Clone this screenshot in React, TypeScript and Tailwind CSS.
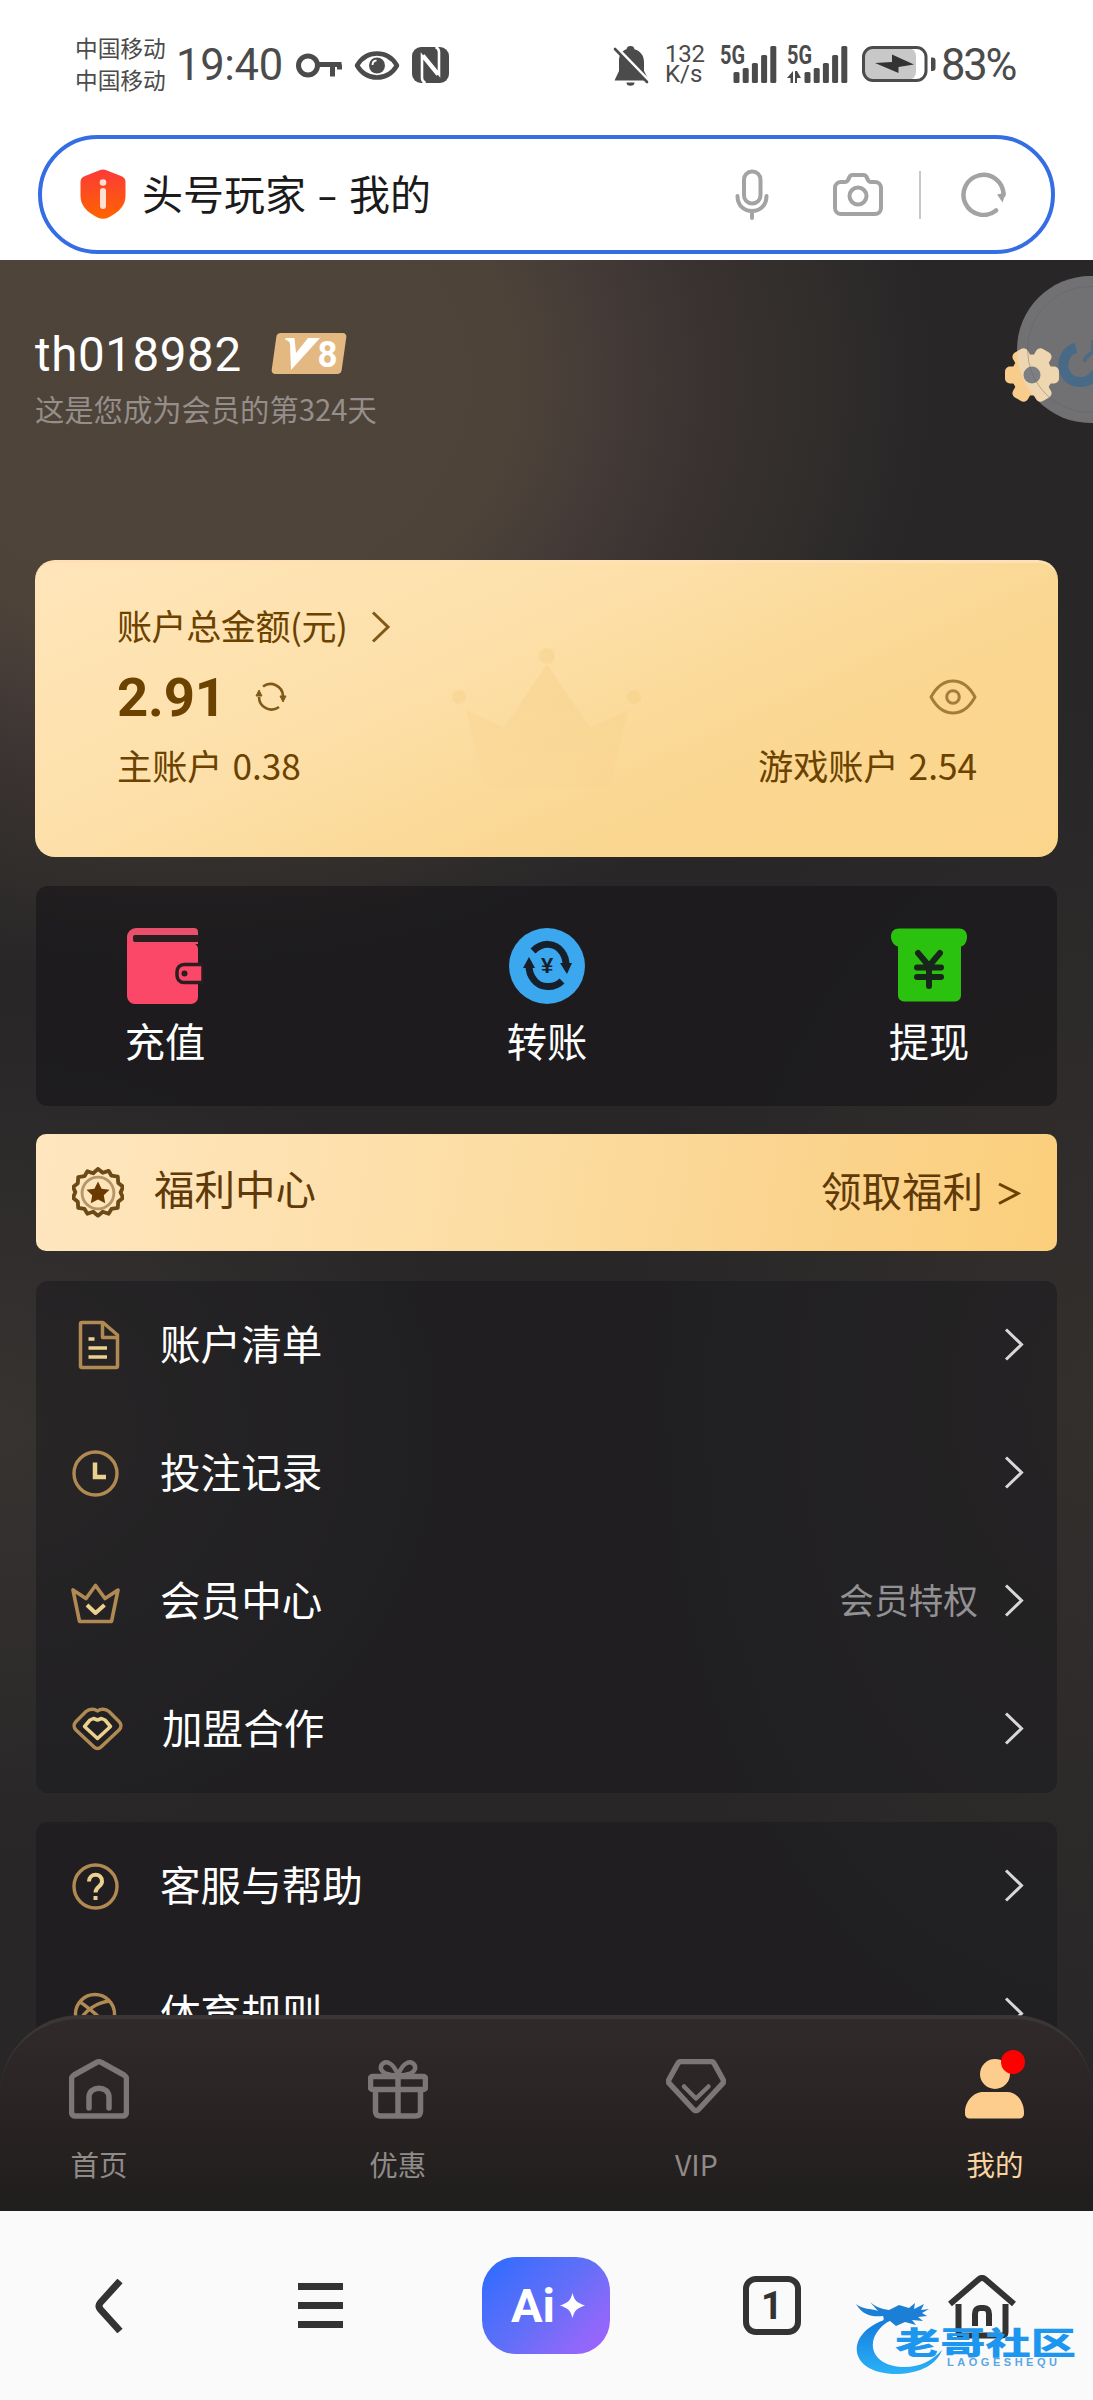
import type { ReactNode } from 'react'
import clsx from 'clsx'

function SignalBars() {
  return (
    <>
      <rect x="0" y="26" width="6" height="11" rx="1.5" />
      <rect x="9.2" y="22" width="6" height="15" rx="1.5" />
      <rect x="18.4" y="17" width="6" height="20" rx="1.5" />
      <rect x="27.6" y="9" width="6" height="28" rx="1.5" />
      <rect x="36.8" y="0" width="6" height="37" rx="1.5" />
    </>
  )
}

function Signal({ active }: { active?: boolean }) {
  return (
    <svg width="60" height="37" viewBox="0 0 60 37" fill="#4b4b4b" className="shrink-0 overflow-visible">
      <text x="0" y="18" fontSize="25" fontWeight="700" textLength="25" lengthAdjust="spacingAndGlyphs" className="font-['Roboto',sans-serif]">5G</text>
      <g transform={active ? 'translate(17.5 0)' : 'translate(13.5 0)'}>
        <SignalBars />
      </g>
      {active && <path d="M0 32l6-7v12H3.500v-5zM8 25v12h2v-5h4l-4-7z" />}
    </svg>
  )
}

function StatusBar() {
  return (
    <div className="flex h-[130px] items-start pt-[46px] pl-[75px] text-[#4b4b4b]">
      <div className="-mt-[14px] w-[101px] shrink-0 text-[22.7px] leading-[32px] whitespace-nowrap">
        <div>中国移动</div>
        <div>中国移动</div>
      </div>
      <div className="-mt-[4px] w-[120px] shrink-0 font-['Roboto','Noto_Sans_CJK_SC',sans-serif] text-[43.5px] leading-[47px] tracking-[-0.3px]">19:40</div>
      <svg width="154" height="38" viewBox="0 0 154 38" className="shrink-0" fill="none" stroke="#4b4b4b">
        <circle cx="12" cy="19.500" r="9.500" strokeWidth="5" />
        <path d="M22 18.500h23.500M36.500 18.500v12M43.500 18.500v5" strokeWidth="5" />
        <path d="M61 19.500C66 11 73 7.500 81 7.500s15 3.500 20 12c-5 8.500-12 12-20 12s-15-3.500-20-12z" strokeWidth="4.500" strokeLinejoin="round" />
        <circle cx="81" cy="19.500" r="8" fill="#4b4b4b" stroke="none" />
        <path d="M76.500 19a4.500 4.500 0 0 1 4-4.500" stroke="#fff" strokeWidth="1.800" />
        <rect x="116" y="1" width="37" height="36" rx="9" fill="#4b4b4b" stroke="none" />
        <path d="M129.500 37c-2.500-1-3.500-3-3.500-5V10l15.500 19" stroke="#fff" strokeWidth="2.600" />
        <path d="M139.500 1c2.500 1 3.500 3 3.500 5v22L127.500 9" stroke="#fff" strokeWidth="2.600" />
      </svg>
      <svg width="38" height="40" viewBox="0 0 38 40" className="ml-[162px] shrink-0">
        <path d="M18.500 0a4 4 0 0 1 4 3.200C28.500 5 32 9.500 32 16v9l5 9.500H2.500L7 25V13.500C7.500 8 10 4.500 14.500 3.200A4 4 0 0 1 18.500 0zM14.500 36.500h8a4 3.300 0 0 1-8 0z" fill="#4b4b4b" />
        <path d="M1 4.500l33 34" stroke="#fff" strokeWidth="4" transform="translate(3 -3)" />
        <path d="M3 3l32 33" stroke="#4b4b4b" strokeWidth="2.600" strokeLinecap="round" />
      </svg>
      <div className="-mt-[2px] ml-[15px] w-[55px] shrink-0 font-['Roboto',sans-serif] text-[24px] leading-[20px]">
        <div className="tracking-[-0.2px]">132</div>
        <div>K/s</div>
      </div>
      <Signal />
      <div className="w-[7px] shrink-0" />
      <Signal active />
      <svg width="76" height="37" viewBox="0 0 76 37" className="ml-[15px] shrink-0">
        <rect x="2" y="2" width="52" height="32" rx="8" fill="#c8c8c8" />
        <rect x="1.500" y="1.500" width="62.500" height="33" rx="9.500" fill="none" stroke="#4b4b4b" strokeWidth="3" />
        <path d="M69 11.500h1.500a3 3 0 0 1 3 3v7.500a3 3 0 0 1-3 3H69z" fill="#4b4b4b" />
        <path d="M13 17l17-1V8.500l22 10-15.500 2.500v6z" fill="#333" />
      </svg>
      <div className="-mt-[4px] ml-[3px] font-['Roboto','Noto_Sans_CJK_SC',sans-serif] text-[43.500px] leading-[47px] tracking-[-2.2px]">83%</div>
    </div>
  )
}

function AddressBar() {
  return (
    <div className="h-[130px] px-[38px] pt-[5px]">
      <div className="flex h-[119px] items-center rounded-full border-[4.5px] border-[#356de4] pl-[38px] pr-[45px]">
        <svg width="46" height="50" viewBox="0 0 46 50" className="-mt-[2px] shrink-0">
          <defs>
            <linearGradient id="shield" x1="0" y1="0" x2="0" y2="1">
              <stop offset="0" stopColor="#fb3a38" />
              <stop offset="1" stopColor="#ff6400" />
            </linearGradient>
          </defs>
          <path d="M19 1.500c3-1.500 5-1.500 8 0l14 5.500c3 1.200 4.500 3 4.500 6V27c0 9-6 16-17 21.500-3.500 1.800-7.500 1.800-11 0C6.500 43 .5 36 .5 27V13c0-3 1.500-4.800 4.500-6z" fill="url(#shield)" />
          <circle cx="23" cy="13.500" r="3.300" fill="#ffe0d5" />
          <path d="M23 22v15" stroke="#ffe0d5" strokeWidth="6" strokeLinecap="round" />
        </svg>
        <div className="-mt-[5px] ml-[16px] flex items-center text-[41px] leading-[60px] whitespace-nowrap text-[#1b1b1b]">
          <span>头号玩家</span>
          <span className="w-[43px] scale-x-[1.5] text-center">-</span>
          <span>我的</span>
        </div>
        <svg width="34" height="51" viewBox="0 0 34 51" className="ml-auto shrink-0" fill="none" stroke="#a3a3a3" strokeWidth="4" strokeLinecap="round">
          <rect x="9" y="2.500" width="16.500" height="32" rx="8" />
          <path d="M2.500 27c0 9 6 15 14.500 15s14.500-6 14.500-15M17 42v7" />
        </svg>
        <svg width="50" height="43" viewBox="0 0 50 43" className="ml-[64px] shrink-0" fill="none" stroke="#a3a3a3" strokeWidth="4" strokeLinejoin="round">
          <path d="M8 9h4c1.500 0 2.300-.7 3-2l1.500-3c.6-1.300 1.600-2 3-2h11c1.400 0 2.400.7 3 2L35 7c.7 1.300 1.500 2 3 2h4a6 6 0 0 1 6 6v20a6 6 0 0 1-6 6H8a6 6 0 0 1-6-6V15a6 6 0 0 1 6-6z" />
          <circle cx="25" cy="23" r="8.500" />
        </svg>
        <div className="ml-[36px] h-[48px] w-[2px] shrink-0 bg-[#c8c8c8]" />
        <svg width="45" height="46" viewBox="0 0 45 46" className="-mt-[2px] ml-[40px] shrink-0">
          <path d="M35 39.500A20 20 0 1 1 42.500 24" fill="none" stroke="#a3a3a3" strokeWidth="4.500" strokeLinecap="round" />
          <path d="M36 23.500l9-2-3.500 10z" fill="#a3a3a3" />
        </svg>
      </div>
    </div>
  )
}

function Profile() {
  return (
    <div className="flex h-[300px] items-start justify-between pl-[35px]">
      <div className="pt-[65px]">
        <div className="flex items-center">
          <span className="w-[236px] pt-[2px] font-['Roboto','Noto_Sans_CJK_SC',sans-serif] text-[47.5px] leading-[56px] tracking-[0.6px] text-white">th018982</span>
          <span className="relative -mt-[1px] flex h-[41px] w-[76px] items-center justify-center">
            <span className="absolute inset-0 mx-[3px] -skew-x-[8deg] rounded-[4px] bg-[#e3b981]" />
            <svg width="76" height="41" viewBox="0 0 76 41" className="relative" fill="#fff">
              <path d="M14.500 5h9l1.500 15L37 5h12L20 37l-1-26c-.2-2-1.500-3.500-4.500-4z" />
              <text x="46.500" y="33.500" fontSize="37" fontWeight="700" textLength="20" lengthAdjust="spacingAndGlyphs" className="font-['Roboto',sans-serif]">8</text>
            </svg>
          </span>
        </div>
        <div className="mt-[5px] text-[29.3px] leading-[40px] text-[#958e8a]">这是您成为会员的第324天</div>
      </div>
      <svg width="54" height="55" viewBox="-27 -27 54 55" className="mt-[88px] mr-[34px] shrink-0" fill="#f8cd8c">
        <circle r="20.500" />
        <rect x="-8.500" y="-28" width="17" height="56" rx="5" transform="rotate(30)" />
        <rect x="-8.500" y="-27" width="17" height="54" rx="5" transform="rotate(90)" />
        <rect x="-8.500" y="-28" width="17" height="56" rx="5" transform="rotate(150)" />
        <circle r="8.500" fill="#3f3d3e" />
      </svg>
    </div>
  )
}

function FloatingBall() {
  return (
    <div className="absolute top-[16px] right-0 h-[147px] w-[76px] overflow-hidden">
      <div className="h-[147px] w-[147px] rounded-full bg-[#dfe3e8]/40 p-[10px]">
        <div className="h-full w-full rounded-full border border-[#5d6065]/40" />
      </div>
      <svg width="40" height="52" viewBox="0 0 40 52" className="absolute top-[64px] left-[40px]" fill="none">
        <path d="M19 8C1 12 2 43 24 42c8 0 12-4 15-9" stroke="#42698a" strokeWidth="10" opacity="0.85" />
        <path d="M36 0v12c-5 3-8 6-9 10" stroke="#42698a" strokeWidth="4" opacity="0.7" />
      </svg>
    </div>
  )
}

function BalanceCard() {
  return (
    <div className="relative mx-[35px] h-[297px] rounded-[20px] border-t-[3px] border-[#ffdfb4] bg-linear-[155deg,#ffe5ba_0%,#fde0a9_38%,#fad792_66%,#fbd58c_100%] pt-[36px] pr-[81px] pl-[82px] text-[#6b4200]">
      <svg width="190" height="160" viewBox="0 0 190 160" className="absolute top-[85px] left-[417px]" opacity="0.16">
        <defs>
          <linearGradient id="crown" x1="0" y1="0" x2="0" y2="1">
            <stop offset="0" stopColor="#e9b95f" />
            <stop offset="1" stopColor="#e9b95f" stopOpacity="0.1" />
          </linearGradient>
        </defs>
        <g fill="#e9b95f">
          <circle cx="95" cy="8" r="8" />
          <circle cx="7" cy="49" r="7" />
          <circle cx="182" cy="49" r="7" />
        </g>
        <path d="M14 62l38 18 43-64 43 64 38-18-16 66c-2 8-6 12-14 12H44c-8 0-12-4-14-12z" fill="url(#crown)" />
      </svg>
      <div className="relative flex h-[52px] items-center text-[35px] leading-[52px]">
        <span className="tracking-[-0.4px]">账户总金额(元)</span>
        <svg width="20" height="32" viewBox="0 0 20 32" className="mt-[3px] ml-[24px]" fill="none" stroke="#6b4200" strokeWidth="3" opacity="0.85">
          <path d="M2 1.500L17 16 2 30.500" />
        </svg>
      </div>
      <div className="relative mt-[3px] flex h-[86px] items-center">
        <span className="w-[138px] font-['Roboto','Noto_Sans_CJK_SC',sans-serif] text-[54.5px] leading-[60px] font-bold tracking-[-0.2px]">2.91</span>
        <svg width="32" height="30" viewBox="0 0 32 30" fill="none" stroke="#6b4200" strokeWidth="2.600" opacity="0.85">
          <path d="M8 4.500A12.500 12.500 0 0 1 28 14M24 25A12.500 12.500 0 0 1 4 15" />
          <path d="M25 14h6l-3 6zM1 14h6l-3-6z" fill="#6b4200" strokeWidth="1" />
        </svg>
        <svg width="48" height="36" viewBox="0 0 48 36" className="ml-auto" fill="none" stroke="#6b4200" strokeWidth="3" opacity="0.6">
          <path d="M2 18C8 7 15 2 24 2s16 5 22 16c-6 11-13 16-22 16S8 29 2 18z" strokeLinejoin="round" />
          <circle cx="24" cy="18" r="6.300" />
        </svg>
      </div>
      <div className="relative flex h-[50px] items-center justify-between text-[35.2px] leading-[50px] [word-spacing:2px]">
        <span>主账户 0.38</span>
        <span>游戏账户 2.54</span>
      </div>
    </div>
  )
}

function Action({ label, children }: { label: string; children: ReactNode }) {
  return (
    <div className="flex w-[80px] flex-col items-center">
      <svg width="76" height="76" viewBox="0 0 76 76">{children}</svg>
      <span className="mt-[7px] text-[40.3px] leading-[58px] whitespace-nowrap text-white">{label}</span>
    </div>
  )
}

function QuickActions() {
  return (
    <div className="mx-[36px] mt-[29px] flex h-[220px] justify-between rounded-[12px] bg-[#151417]/60 pt-[42px] pr-[88px] pl-[89px]">
      <Action label="充值">
        <path d="M9 0h58a4 4 0 0 1 4 4v12H0V9a9 9 0 0 1 9-9z" fill="#e8506b" />
        <path d="M0 10h5v5h60a6 6 0 0 1 6 6v48a7 7 0 0 1-7 7H8a8 8 0 0 1-8-8z" fill="#fb4768" />
        <rect x="6" y="7" width="66" height="7" rx="2" fill="#2b1d20" />
        <path d="M57 36.500h17a2 2 0 0 1 2 2v14a2 2 0 0 1-2 2H57a7 7 0 0 1-7-7v-4a7 7 0 0 1 7-7z" fill="#fb4768" stroke="#2b1d20" strokeWidth="3.500" />
        <circle cx="57.500" cy="45.500" r="3" fill="#2b1d20" />
      </Action>
      <Action label="转账">
        <circle cx="38" cy="38" r="38" fill="#3aa7ee" />
        <path d="M24 23C33 14 46 14 53 24c3 4 4 9 4 13" fill="none" stroke="#17202a" strokeWidth="7" />
        <path d="M51 35h12l-5 11z" fill="#17202a" />
        <path d="M53 53c-8 8-22 7-28-1-4-5-5-9-5-14" fill="none" stroke="#17202a" strokeWidth="7" />
        <path d="M14 40h12l-6-11z" fill="#17202a" />
        <text x="38" y="45" fontSize="22" fontWeight="700" textAnchor="middle" fill="#17202a" className="font-['Liberation_Sans',sans-serif]">¥</text>
      </Action>
      <Action label="提现">
        <path d="M8 .5h60c5 0 8 3 8 8 0 5-2 9-6 10v49a6 6 0 0 1-6 6H13a6 6 0 0 1-6-6v-49C3 17.500 0 13.500 0 8.500c0-5 3-8 8-8z" fill="#2bc20f" />
        <path d="M27 25l11 13 11-13M38 38v20M26 39.500h24M26 49h24" fill="none" stroke="#17251a" strokeWidth="6" strokeLinecap="round" />
      </Action>
    </div>
  )
}

function WelfareBanner() {
  return (
    <div className="mx-[36px] mt-[28px] flex h-[117px] items-center rounded-[10px] bg-linear-[100deg,#ffe6bf_0%,#fcdda3_45%,#fad28a_80%,#fbcf7b_100%] pr-[36px] pl-[36px] text-[#5f3a08]">
      <svg width="52" height="52" viewBox="0 0 54 54" className="shrink-0" fill="none" stroke="#6b4a17">
        <path
          d="M27 2l5 4 6-2 3 5 6.500 1 .5 6.500 5 4-2.500 6L53 32l-5 4-.5 6.500-6.500 1-3 5-6-2-5 4-5-4-6 2-3-5-6.500-1-.5-6.500-5-4 2.500-6L1 21l5-4 .5-6.500 6.500-1 3-5 6 2z"
          strokeWidth="4"
          strokeLinejoin="round"
        />
        <circle cx="27" cy="27" r="16.500" strokeWidth="3" opacity="0.5" />
        <path d="M27 15l3.700 7.600 8.300 1-6 5.700 1.500 8.400L27 33.800l-7.500 3.900 1.500-8.400-6-5.700 8.300-1z" fill="#6b3a00" stroke="none" />
      </svg>
      <span className="-mt-[9px] ml-[30px] text-[40.5px] leading-[58px]">福利中心</span>
      <span className="-mt-[5px] ml-auto text-[40.5px] leading-[58px]">领取福利</span>
      <svg width="23" height="24" viewBox="0 0 23 24" className="mt-[2px] ml-[15px]" fill="none" stroke="#6b4200" strokeWidth="3">
        <path d="M1 2l19 9.500L1 21.500" />
      </svg>
    </div>
  )
}

const GOLD = '#b08a52'
const GOLD_LIGHT = '#ecd08d'

const BillIcon = (
  <g fill="none" strokeWidth="3.500" stroke={GOLD} strokeLinejoin="round">
    <path d="M12 4.500h21L47.500 17v31a1.500 1.500 0 0 1-1.500 1.500H12a1.500 1.500 0 0 1-1.500-1.500V6A1.500 1.500 0 0 1 12 4.500z" />
    <path d="M32.500 5v14.500h15" />
    <path d="M18.500 21h6M18.500 30h18.500M18.500 39h18.500" stroke={GOLD_LIGHT} />
  </g>
)

const ClockIcon = (
  <g fill="none" strokeWidth="3.400">
    <circle cx="25.500" cy="27.500" r="21.500" stroke={GOLD} />
    <path d="M25 16.500V31h11" stroke={GOLD_LIGHT} strokeWidth="4.500" />
  </g>
)

const CrownIcon = (
  <g fill="none" strokeWidth="3.700" strokeLinejoin="round">
    <path d="M3 16l6.500 31.500h32L48 16l-13 8.500-9.500-13-9.500 13z" stroke={GOLD} />
    <path d="M17 31l8.500 8 9-8" stroke={GOLD_LIGHT} strokeWidth="4" />
  </g>
)

const HeartIcon = (
  <g fill="none" strokeWidth="3.500" strokeLinejoin="round" transform="translate(0 1.500)">
    <path d="M27.500 7.500c3-2.500 8-2.500 11.500.5l10 10c2.500 2.500 2.500 6 0 8.500L31 43.500c-2 2-5 2-7 0L6 26.500c-2.500-2.500-2.500-6 0-8.500L16 8c3.500-3 8.500-3 11.500-.5z" stroke={GOLD} />
    <path d="M27.500 16.500l4-1.500 3.500 1.500 5.500 6.500-13 12-13-12 5.500-6.500 3.500-1.500z" stroke={GOLD_LIGHT} strokeWidth="3.500" />
  </g>
)

const HelpIcon = (
  <g fill="none" strokeWidth="3.400">
    <circle cx="25.500" cy="27.500" r="21.500" stroke={GOLD} />
    <path d="M19 22.500c0-9 13.500-9 13 0 0 5-6.500 5-6.500 11M25.500 37v4" stroke={GOLD_LIGHT} strokeWidth="4" />
  </g>
)

const BallIcon = (
  <g fill="none" strokeWidth="3.400" stroke={GOLD}>
    <circle cx="25" cy="27" r="19.500" />
    <path d="M10 15c10 6 22 18 30 25M40 14C28 15 14 23 8 37" />
  </g>
)

function Chevron() {
  return (
    <svg width="20" height="33" viewBox="0 0 20 33" fill="none" stroke="#d8d8d8" strokeWidth="3" className="-mt-[2px]">
      <path d="M2 1.500l15.500 15L2 31.500" />
    </svg>
  )
}

interface MenuItem {
  icon: ReactNode
  label: string
  hint?: string
  wide?: boolean
}

const ACCOUNT_ITEMS: MenuItem[] = [
  { icon: BillIcon, label: '账户清单' },
  { icon: ClockIcon, label: '投注记录' },
  { icon: CrownIcon, label: '会员中心', hint: '会员特权' },
  { icon: HeartIcon, label: '加盟合作', wide: true },
]

const HELP_ITEMS: MenuItem[] = [
  { icon: HelpIcon, label: '客服与帮助' },
  { icon: BallIcon, label: '体育规则' },
]

function MenuList({ items }: { items: MenuItem[] }) {
  return (
    <div className="mx-[36px] rounded-[12px] bg-[#17161a]/45">
      {items.map(({ icon, label, hint, wide }) => (
        <div key={label} className="flex h-[128px] items-center pr-[33px] pl-[34px]">
          <svg width="54" height="54" viewBox="0 0 54 54" className="shrink-0">{icon}</svg>
          <span className={clsx('-mt-[5px] text-[40.6px] leading-[58px] whitespace-nowrap text-white', wide ? 'ml-[38px]' : 'ml-[36px]')}>
            {label}
          </span>
          <div className="ml-auto flex items-center gap-[26px]">
            {hint && <span className="-mt-[5px] text-[34.7px] leading-[50px] text-[#929193]">{hint}</span>}
            <Chevron />
          </div>
        </div>
      ))}
    </div>
  )
}

function Tab({ label, active, children }: { label: string; active?: boolean; children: ReactNode }) {
  return (
    <div className="relative flex w-[60px] flex-col items-center">
      <svg width="60" height="60" viewBox="0 0 60 60" fill="none" stroke="#7b7776" strokeWidth="5.500" strokeLinejoin="round" strokeLinecap="round">
        {children}
      </svg>
      <span className={clsx('mt-[24px] text-[28.5px] leading-[42px] whitespace-nowrap', active ? 'text-[#f9d3a0]' : 'text-[#8f8b89]')}>
        {label}
      </span>
      {active && <span className="absolute -top-[9px] right-0 h-[24px] w-[24px] rounded-full bg-[#fe0000]" />}
    </div>
  )
}

function TabBar() {
  return (
    <div className="absolute inset-x-0 bottom-0 flex h-[196px] justify-between rounded-t-[80px] border-t-[4px] border-[#3a3634] bg-linear-to-b from-[#312a2a] via-[#292323] to-[#1f1e1c] pt-[40px] pr-[68px] pl-[69px]">
      <Tab label="首页">
        <path d="M27.500 3.500c1.700-1 3.300-1 5 0L55 16c1.500.9 2.500 2 2.500 4v33c0 2.500-1.500 4-4 4h-47c-2.500 0-4-1.500-4-4V20c0-2 1-3.100 2.500-4z" />
        <path d="M20 49V38.500c0-12.500 20-12.500 20 0V49" />
      </Tab>
      <Tab label="优惠">
        <path d="M4.500 17.500h51a2 2 0 0 1 2 2v9a2 2 0 0 1-2 2h-51a2 2 0 0 1-2-2v-9a2 2 0 0 1 2-2zM7.500 31v21c0 3.500 1.500 5 5 5h35c3.500 0 5-1.500 5-5V31M30 17.500V56" />
        <path d="M29 16C24 17 15 15 13 10c-1-5 4-8 8-6 4 1.500 7 7 9 12 2-5 5-10.500 9-12 4-2 9 1 8 6-2 5-11 7-16 6" strokeWidth="4.500" />
      </Tab>
      <Tab label="VIP">
        <path d="M15 2.500h30c1.500 0 2.500.6 3.200 2L57 20.500c.8 1.500.6 3-.5 4.200L33 50c-2 2.200-4 2.200-6 0L3.500 24.700c-1.100-1.200-1.300-2.700-.5-4.200L11.800 4.500c.7-1.400 1.700-2 3.200-2z" />
        <path d="M18 27.500l12 12 12.500-12" strokeWidth="4.500" />
      </Tab>
      <Tab label="我的" active>
        <g fill="#fccd8d" stroke="none">
          <circle cx="30" cy="15" r="15" />
          <path d="M18 33h24c10 0 17 10 17 20v2a4.500 4.500 0 0 1-4.500 4.500h-50A4.500 4.500 0 0 1 0 55v-2c0-10 8-20 18-20z" />
        </g>
      </Tab>
    </div>
  )
}

function Watermark() {
  return (
    <div className="absolute top-[86px] left-[853px] h-[90px] w-[225px]">
      <svg width="225" height="90" viewBox="0 0 225 90">
        <defs>
          <linearGradient id="wave" x1="0" y1="0" x2="0" y2="1">
            <stop offset="0" stopColor="#1378dc" />
            <stop offset="1" stopColor="#2bb2f7" />
          </linearGradient>
        </defs>
        <path d="M44 20C-8 28-12 78 46 77c22-1 38-10 43-24-10 11-24 18-40 17C12 68 10 34 44 20z" fill="url(#wave)" />
        <path d="M3 7c8 6 14 4 22 7l-8-9c6 5 11 7 19 8l10-5 10 3 6-5-1 6 10-5-3 6 8-1-7 4 5 3-9 1 5 4-11-1 4 5-11-3-9 4-6-5-8 2c2-3 2-5 1-7-10 1-20 0-27-12z" fill="#1b7fd6" />
        <text x="42" y="57" fontSize="39" fontWeight="900" textLength="181" lengthAdjust="spacingAndGlyphs" fill="#1c96ee" className="font-['Noto_Sans_CJK_SC',sans-serif]" transform="translate(0 11.400) scale(1 0.800)">老哥社区</text>
        <text x="94" y="69" fontSize="11" fontWeight="700" textLength="110" fill="#5aa7e4" className="font-['Liberation_Sans',sans-serif]">LAOGESHEQU</text>
      </svg>
    </div>
  )
}

function BrowserBar() {
  return (
    <div className="relative flex h-[189px] items-start bg-[#fafafa] pt-[46px] pl-[94px]">
      <svg width="30" height="54" viewBox="0 0 30 54" className="mt-[22px] shrink-0" fill="none" stroke="#333" strokeWidth="7">
        <path d="M26 2L6.500 23.500c-2 2.300-2 4.700 0 7L26 52" />
      </svg>
      <div className="mt-[26px] ml-[174px] flex w-[45px] shrink-0 flex-col gap-[12px]">
        <span className="h-[7px] bg-[#333]" />
        <span className="h-[7px] bg-[#333]" />
        <span className="h-[7px] bg-[#333]" />
      </div>
      <div className="ml-[139px] flex h-[97px] w-[128px] shrink-0 items-center rounded-[34px] bg-linear-135 from-[#236bff] via-[#616ff8] to-[#a561fc] pl-[29px]">
        <span className="w-[49px] font-['Roboto',sans-serif] text-[47px] leading-[50px] font-bold text-white">Ai</span>
        <svg width="25" height="25" viewBox="0 0 25 25" fill="#fff">
          <path d="M12.500 0c2 7.500 4 9.500 12.500 12.500-8.500 3-10.500 5-12.500 12.500-2-7.500-4-9.500-12.500-12.500C8.500 9.500 10.500 7.500 12.500 0z" />
        </svg>
      </div>
      <div className="mt-[19px] ml-[133px] flex h-[59px] w-[58px] shrink-0 items-center justify-center rounded-[13px] border-[6px] border-[#333] font-['Roboto',sans-serif] text-[38px] leading-none font-bold text-[#333]">
        1
      </div>
      <svg width="70" height="64" viewBox="0 0 70 64" className="mt-[18px] ml-[146px] shrink-0" fill="none" stroke="#333" strokeWidth="6">
        <path d="M3 29L31.500 4.500c2.300-2 4.700-2 7 0L67 29" />
        <path d="M11.500 29v28c0 2.500 1 3.500 3.500 3.500h40c2.500 0 3.500-1 3.500-3.500V29M28 51V39c0-4 2-6 5-6h4c3 0 5 2 5 6v12" />
      </svg>
      <Watermark />
    </div>
  )
}

export default function App() {
  return (
    <div className="w-[1093px] overflow-hidden bg-white font-['Noto_Sans_CJK_SC',sans-serif]">
      <StatusBar />
      <AddressBar />
      <main className="relative h-[1951px] overflow-hidden bg-[#282627] bg-[radial-gradient(ellipse_740px_600px_at_190px_120px,#4e443a_0%,#4d4339_44%,#433a37_58%,#383130_72%,#312e2c_84%,rgba(40,38,39,0)_100%),radial-gradient(ellipse_460px_700px_at_100%_1140px,#332f2d_0%,rgba(51,47,45,0)_100%),radial-gradient(ellipse_460px_420px_at_0px_1170px,#373331_0%,rgba(55,51,49,0)_100%)]">
        <Profile />
        <BalanceCard />
        <QuickActions />
        <WelfareBanner />
        <div className="mt-[30px] flex flex-col gap-[29px]">
          <MenuList items={ACCOUNT_ITEMS} />
          <MenuList items={HELP_ITEMS} />
        </div>
        <FloatingBall />
        <TabBar />
      </main>
      <BrowserBar />
    </div>
  )
}
